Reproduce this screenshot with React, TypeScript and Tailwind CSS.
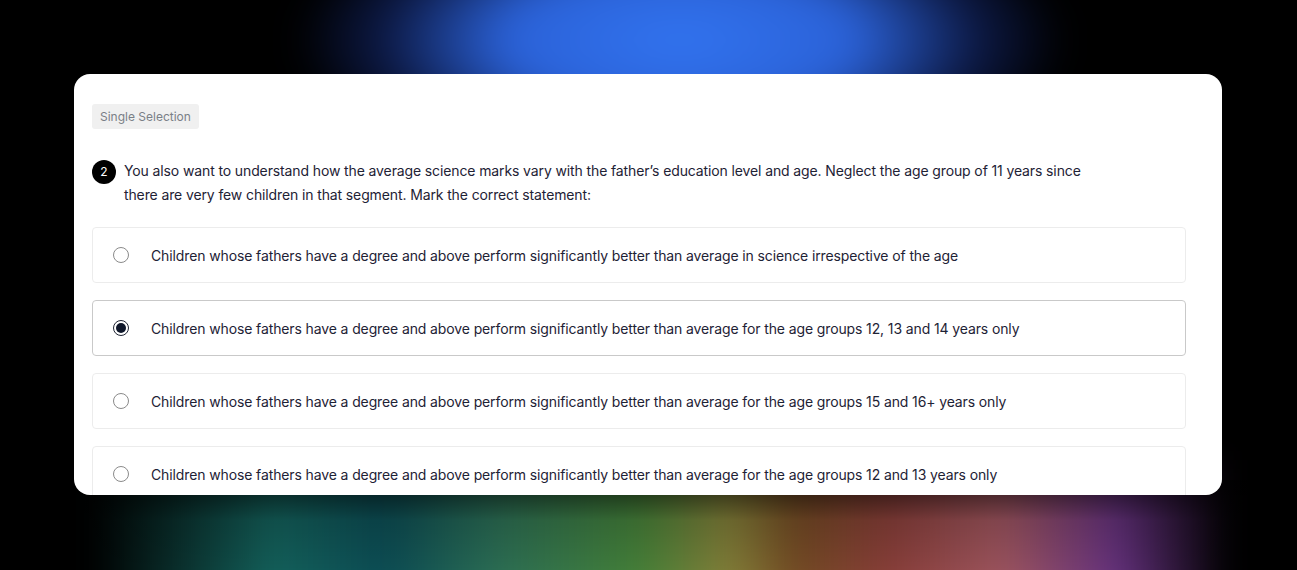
import React from 'react';

const options = [
  'Children whose fathers have a degree and above perform significantly better than average in science irrespective of the age',
  'Children whose fathers have a degree and above perform significantly better than average for the age groups 12, 13 and 14 years only',
  'Children whose fathers have a degree and above perform significantly better than average for the age groups 15 and 16+ years only',
  'Children whose fathers have a degree and above perform significantly better than average for the age groups 12 and 13 years only',
];

const Radio = ({ checked }: { checked: boolean }) => (
  <span
    className={
      checked
        ? 'flex h-4 w-4 shrink-0 items-center justify-center rounded-full border border-[#1f2433]'
        : 'flex h-4 w-4 shrink-0 items-center justify-center rounded-full border-[1.5px] border-[#8a8a8a]'
    }
  >
    {checked && <span className="h-[10px] w-[10px] rounded-full bg-[#0f172a]" />}
  </span>
);

export default function App() {
  const [selected, setSelected] = React.useState(1);

  return (
    <div className="relative h-[570px] w-full overflow-hidden bg-black font-['Inter',sans-serif]">
      {/* glow backdrop */}
      <div className="absolute left-[300px] top-[-110px] h-[300px] w-[760px] rounded-full bg-[radial-gradient(ellipse_at_center,#3274f0_0%,#2b62d8_32%,rgba(20,40,110,0.6)_56%,rgba(0,0,0,0)_72%)] blur-[18px]" />
      <div className="absolute bottom-[-40px] left-[90px] h-[150px] w-[1140px] bg-[linear-gradient(90deg,rgba(0,0,0,0)_0%,#135f59_16%,#0b4a52_26%,#2b6c52_36%,#427d37_48%,#807c37_56%,#704822_62%,#853c37_70%,#9a535c_80%,#62307b_90%,rgba(0,0,0,0)_100%)] blur-[14px]" />
      <div className="absolute bottom-0 left-0 h-[90px] w-full bg-[linear-gradient(180deg,rgba(0,0,0,0.7)_0%,rgba(0,0,0,0.15)_45%,rgba(0,0,0,0)_100%)]" />

      <div className="relative ml-[74px] mt-[74px] h-[421px] w-[1148px] overflow-hidden rounded-2xl bg-white">
        <div className="pl-[18px] pr-[36px] pt-[29px]">
          <span className="inline-block rounded-[3px] bg-[#f0f0f0] px-2 py-[5px] text-[12px] leading-[15px] text-[#7a7f87]">
            Single Selection
          </span>

          <div className="mt-[30px] flex gap-2">
            <span className="mt-[1px] flex h-6 w-6 shrink-0 items-center justify-center rounded-full bg-black text-[12px] text-white">
              2
            </span>
            <p className="max-w-[968px] text-[14px] leading-6 tracking-[-0.12px] text-[#1e2235]">
              You also want to understand how the average science marks vary with the father’s education level and age. Neglect the age group of 11 years since there are very few children in that segment. Mark the correct statement:
            </p>
          </div>

          <div className="mt-[20px] flex flex-col gap-[17px]">
            {options.map((opt, i) => (
              <button
                key={i}
                onClick={() => setSelected(i)}
                className={
                  i === selected
                    ? 'flex h-[56px] w-full items-center gap-[22px] rounded-[4px] border border-[#c9c9c9] px-5 text-left'
                    : 'flex h-[56px] w-full items-center gap-[22px] rounded-[4px] border border-[#ececec] px-5 text-left'
                }
              >
                <Radio checked={i === selected} />
                <span className="text-[14px] tracking-[-0.12px] text-[#1e2235]">{opt}</span>
              </button>
            ))}
          </div>
        </div>
      </div>
    </div>
  );
}
